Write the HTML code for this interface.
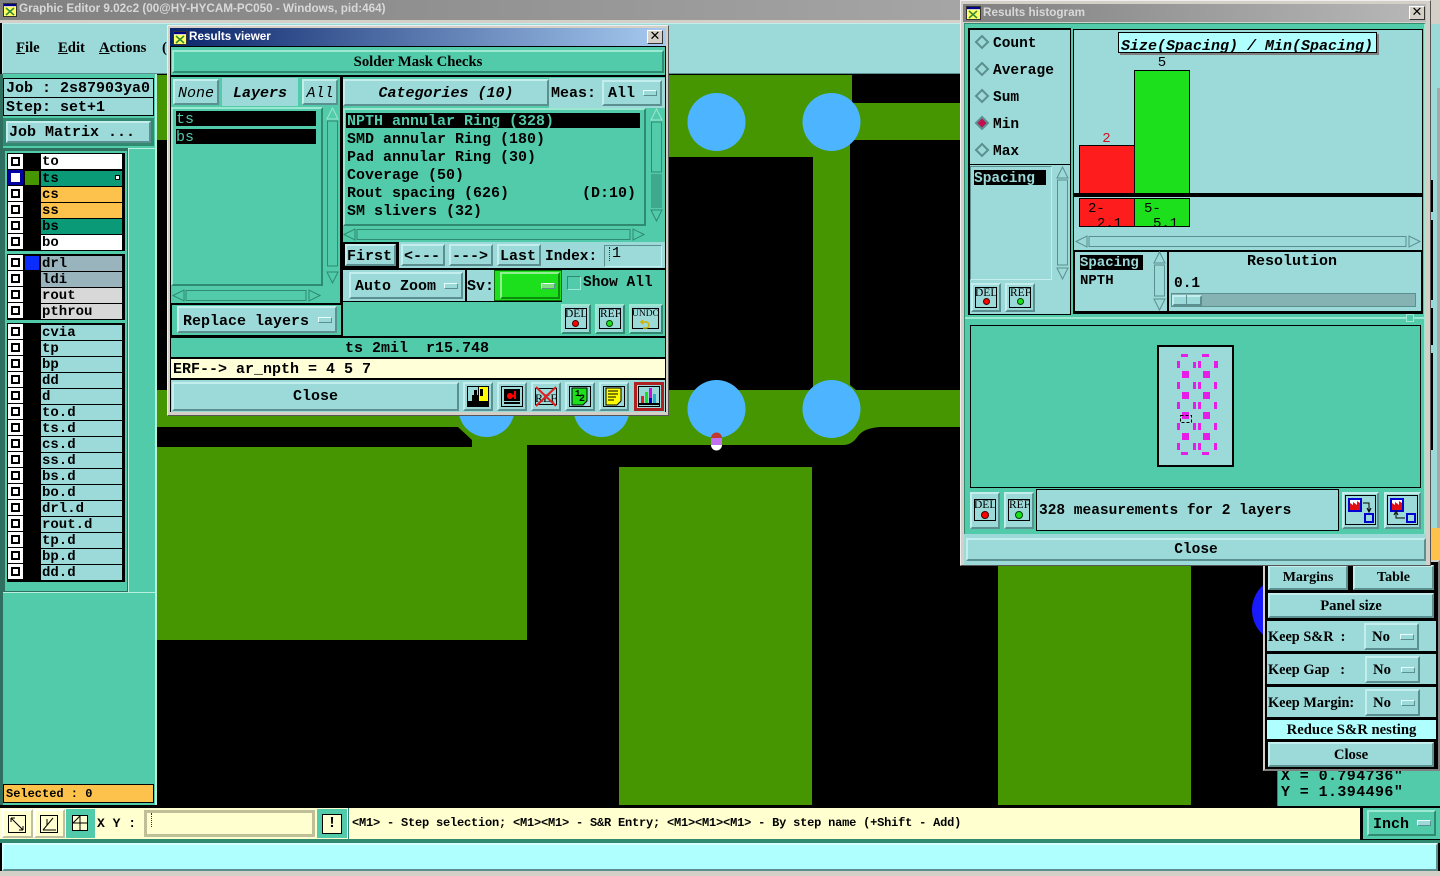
<!DOCTYPE html>
<html><head><meta charset="utf-8"><title>Graphic Editor</title>
<style>
html,body{margin:0;padding:0;background:#000;width:1440px;height:876px;overflow:hidden}
div,span{position:absolute;box-sizing:border-box}
svg{position:absolute;overflow:visible}
.m{font:bold 15px/18px "Liberation Mono",monospace;white-space:pre;color:#000;margin-top:2px}
.s{font:bold 14.700px/18px "Liberation Serif",serif;white-space:pre;color:#000;margin-top:2px}
.c{text-align:center}
.i{font-style:italic}
.l{background:#9cd9d9}
.g{background:#52cbaa}
.b{background:#9cd9d9;border:2px solid;border-color:#c4eeee #5c8f8f #5c8f8f #c4eeee}
.bg{background:#52cbaa;border:2px solid;border-color:#9ce8d0 #2f8a70 #2f8a70 #9ce8d0}
.k{background:#000}
.mk{width:14px;height:6px;background:#9cd9d9;border:1px solid;border-color:#e8ffff #5c8f8f #5c8f8f #e8ffff}
.cb{width:15px;height:15px;background:#000;border:3px solid #fff}
.cb i{position:absolute;left:0;top:0;width:9px;height:9px;border:2px solid #000;background:#fff;box-sizing:border-box}
.r{left:41px;width:81px;height:15px;font:bold 14px/16px "Liberation Mono",monospace;padding-left:1px;white-space:pre}
.tt{font:bold 11.700px/18px "Liberation Sans",sans-serif;white-space:pre}
</style></head><body>

<!-- canvas -->
<div class="k" style="left:0;top:0;width:1440px;height:876px"></div>
<svg style="left:0;top:0" width="1440" height="876">
<g fill="#459600">
<rect x="157" y="75" width="10" height="65"/>
<path d="M660 75H852V103H960V140H850V157H850V385L856 390H960V427H880Q864 428 858 436Q852 445 843 445H472V440L458 427H157V390H813V157H660Z"/>
<rect x="157" y="447" width="370" height="193"/>
<rect x="472" y="440" width="55" height="10"/>
<rect x="619" y="467" width="193" height="338"/>
<rect x="998" y="560" width="193" height="245"/>
</g>
<g fill="#4db5ff">
<circle cx="716.500" cy="122" r="29"/><circle cx="831.500" cy="122" r="29"/>
<circle cx="716.500" cy="409" r="29"/><circle cx="831.500" cy="409" r="29"/>
<circle cx="486.500" cy="409" r="28"/><circle cx="601.500" cy="409" r="28"/>
</g>
<path d="M711 438a5.500 5.500 0 0 1 11 0z" fill="#c0392b"/>
<rect x="711" y="438" width="11" height="7" fill="#c070f0"/>
<path d="M711 445h11a5.500 5.500 0 0 1-11 0z" fill="#fff"/>
<circle cx="1285" cy="610" r="33" fill="#1a1aff"/>
</svg>

<!-- main title -->
<div style="left:0;top:0;width:1440px;height:20px;background:linear-gradient(90deg,#808080,#b8b8b8)"></div>
<div style="left:3px;top:3px;width:14px;height:14px;background:#d4d0c8;border:1px solid #333"><svg width="12" height="12"><rect width="12" height="2" fill="#008"/><rect y="3" width="12" height="9" fill="#ff6"/><path d="M2 4l8 7M10 4l-8 7" stroke="#383" stroke-width="1.500"/></svg></div>
<div class="tt" style="left:19px;top:0;color:#d8d8d8">Graphic Editor 9.02c2 (00@HY-HYCAM-PC050 - Windows, pid:464)</div>

<!-- menu bar -->
<div style="left:0;top:20px;width:1440px;height:3px;background:#d4d0c8"></div>
<div class="l" style="left:2px;top:23px;width:960px;height:51px;border:1px solid;border-color:#c4eeee #5c8f8f #5c8f8f #c4eeee"></div>
<div class="s" style="left:16px;top:37px"><u>F</u>ile</div>
<div class="s" style="left:58px;top:37px"><u>E</u>dit</div>
<div class="s" style="left:99px;top:37px"><u>A</u>ctions</div>
<div class="s" style="left:162px;top:37px">(</div>

<!-- left column -->
<div class="g" style="left:0;top:74px;width:157px;height:734px"></div>
<div style="left:0;top:74px;width:3px;height:734px;background:#2f6f5f"></div>
<div style="left:155px;top:74px;width:2px;height:734px;background:#b8f0e0"></div>
<div class="l" style="left:3px;top:78px;width:151px;height:20px;border:1px solid #000"></div>
<div class="m" style="left:6px;top:78px">Job : 2s87903ya0</div>
<div class="l" style="left:3px;top:97px;width:151px;height:19px;border:1px solid #000"></div>
<div class="m" style="left:6px;top:97px">Step: set+1</div>
<div class="k" style="left:3px;top:118px;width:151px;height:28px;background:#2f8a70"></div>
<div class="b" style="left:6px;top:121px;width:145px;height:22px"></div>
<div class="m" style="left:9px;top:122px">Job Matrix ...</div>

<div style="left:3px;top:148px;width:126px;height:444px;background:#2f6f5f"></div>
<div class="g" style="left:128px;top:148px;width:27px;height:444px;border-left:1px solid #b8f0e0;border-top:1px solid #b8f0e0"></div>
<div class="g" style="left:5px;top:151px;width:122px;height:440px"></div>

<div class="k" style="left:7px;top:153px;width:118px;height:98px"></div>
<div class="k" style="left:7px;top:254px;width:118px;height:66px"></div>
<div class="k" style="left:7px;top:323px;width:118px;height:259px"></div>
<div class="cb" style="left:8px;top:154px"><i></i></div>
<div class="cb" style="left:8px;top:170px;border-color:#0000a0;border-width:3px;background:#fff"><i style="background:#fff;border-color:#fff"></i></div>
<div class="cb" style="left:8px;top:186px"><i></i></div>
<div class="cb" style="left:8px;top:202px"><i></i></div>
<div class="cb" style="left:8px;top:218px"><i></i></div>
<div class="cb" style="left:8px;top:234px"><i></i></div>
<div class="cb" style="left:8px;top:255px"><i></i></div>
<div class="cb" style="left:8px;top:271px"><i></i></div>
<div class="cb" style="left:8px;top:287px"><i></i></div>
<div class="cb" style="left:8px;top:303px"><i></i></div>
<div class="cb" style="left:8px;top:324px"><i></i></div>
<div class="cb" style="left:8px;top:340px"><i></i></div>
<div class="cb" style="left:8px;top:356px"><i></i></div>
<div class="cb" style="left:8px;top:372px"><i></i></div>
<div class="cb" style="left:8px;top:388px"><i></i></div>
<div class="cb" style="left:8px;top:404px"><i></i></div>
<div class="cb" style="left:8px;top:420px"><i></i></div>
<div class="cb" style="left:8px;top:436px"><i></i></div>
<div class="cb" style="left:8px;top:452px"><i></i></div>
<div class="cb" style="left:8px;top:468px"><i></i></div>
<div class="cb" style="left:8px;top:484px"><i></i></div>
<div class="cb" style="left:8px;top:500px"><i></i></div>
<div class="cb" style="left:8px;top:516px"><i></i></div>
<div class="cb" style="left:8px;top:532px"><i></i></div>
<div class="cb" style="left:8px;top:548px"><i></i></div>
<div class="cb" style="left:8px;top:564px"><i></i></div>
<div style="left:25px;top:171px;width:14px;height:14px;background:#459600"></div>
<div style="left:25px;top:256px;width:14px;height:14px;background:#0a2cff"></div>

<div class="r" style="top:154px;background:#fff">to</div>
<div class="r" style="top:171px;background:#0a9a78">ts<span style="right:2px;top:4px;width:5px;height:5px;border:1px solid #000;background:#fff"></span></div>
<div class="r" style="top:187px;background:#fdc24c">cs</div>
<div class="r" style="top:203px;background:#fdc24c">ss</div>
<div class="r" style="top:219px;background:#0a9a78">bs</div>
<div class="r" style="top:235px;background:#fff">bo</div>
<div class="r" style="top:256px;background:#9ab4bd">drl</div>
<div class="r" style="top:272px;background:#9ab4bd">ldi</div>
<div class="r" style="top:288px;background:#d8d8d8">rout</div>
<div class="r" style="top:304px;background:#d8d8d8">pthrou</div>
<div class="r l" style="top:325px">cvia</div>
<div class="r l" style="top:341px">tp</div>
<div class="r l" style="top:357px">bp</div>
<div class="r l" style="top:373px">dd</div>
<div class="r l" style="top:389px">d</div>
<div class="r l" style="top:405px">to.d</div>
<div class="r l" style="top:421px">ts.d</div>
<div class="r l" style="top:437px">cs.d</div>
<div class="r l" style="top:453px">ss.d</div>
<div class="r l" style="top:469px">bs.d</div>
<div class="r l" style="top:485px">bo.d</div>
<div class="r l" style="top:501px">drl.d</div>
<div class="r l" style="top:517px">rout.d</div>
<div class="r l" style="top:533px">tp.d</div>
<div class="r l" style="top:549px">bp.d</div>
<div class="r l" style="top:565px">dd.d</div>

<div style="left:3px;top:592px;width:152px;height:190px;background:#52cbaa;border-top:1px solid #b8f0e0"></div>
<div style="left:3px;top:784px;width:151px;height:19px;background:#fdc24c;border:1px solid #000"></div>
<div style="left:6px;top:786px;font:bold 12px/17px 'Liberation Mono',monospace;white-space:pre">Selected : 0</div>

<!-- bottom bars -->
<div style="left:0;top:805px;width:1440px;height:3px;background:#000"></div>
<div style="left:0;top:808px;width:1440px;height:31px;background:#ffffd0"></div>
<div style="left:0;top:839px;width:1440px;height:4px;background:#2f8a70"></div>
<div style="left:2px;top:843px;width:1436px;height:28px;background:#b0ffff;border:2px solid;border-color:#d8ffff #5c9090 #5c9090 #d8ffff"></div>
<div style="left:0;top:871px;width:1440px;height:5px;background:#d4d0c8"></div>

<div style="left:2px;top:809px;width:31px;height:29px;background:#ffffd0;border:2px solid;border-color:#fff #c0c0a0 #c0c0a0 #fff"></div>
<div style="left:34px;top:809px;width:31px;height:29px;background:#ffffd0;border:2px solid;border-color:#fff #c0c0a0 #c0c0a0 #fff"></div>
<div class="bg" style="left:66px;top:809px;width:29px;height:29px;background:#52cbaa;border-color:#52cbaa"></div>
<svg style="left:8px;top:815px" width="18" height="18" fill="none" stroke="#000"><rect x=".5" y=".5" width="17" height="17"/><path d="M3 3l12 12M3 3h4M3 3v4M15 15h-4M15 15v-4"/></svg>
<svg style="left:40px;top:815px" width="18" height="18" fill="none" stroke="#000"><rect x=".5" y=".5" width="17" height="17"/><path d="M3 15l10-12M3 15h13M7 4v6"/></svg>
<svg style="left:72px;top:815px" width="16" height="16" fill="#ffffd0" stroke="#000"><rect x=".5" y=".5" width="15" height="15"/><path d="M8 1v14M1 8h14M1 8l7-7"/></svg>
<div class="m" style="left:97px;top:813px;font-size:13px">X Y :</div>
<div style="left:144px;top:810px;width:171px;height:27px;background:#ffffd0;border:3px solid #c0c098"></div>
<div style="left:151px;top:813px;width:1px;height:14px;border-left:1px dotted #333"></div>
<div style="left:317px;top:809px;width:30px;height:29px;background:#52cbaa;padding:0"></div>
<div style="left:322px;top:814px;width:20px;height:20px;background:#ffffd0;border:1px solid #000;font:bold 15px/18px 'Liberation Mono',monospace;text-align:center">!</div>
<div style="left:348px;top:808px;width:1px;height:31px;background:#2f8a70"></div>
<div style="left:352px;top:815px;font:bold 12px/16px 'Liberation Mono',monospace;white-space:pre;letter-spacing:-.2px">&lt;M1&gt; - Step selection; &lt;M1&gt;&lt;M1&gt; - S&amp;R Entry; &lt;M1&gt;&lt;M1&gt;&lt;M1&gt; - By step name (+Shift - Add)</div>
<div class="k" style="left:1360px;top:806px;width:80px;height:34px"></div>
<div class="g" style="left:1363px;top:808px;width:77px;height:31px"></div>
<div class="bg" style="left:1367px;top:810px;width:69px;height:26px"></div>
<div class="m" style="left:1373px;top:814px">Inch</div>
<div class="mk" style="left:1417px;top:820px"></div>

<!-- bottom right coords -->
<div class="g" style="left:1277px;top:770px;width:163px;height:36px;border-left:1px solid #2f8a70"></div>
<div class="m" style="left:1281px;top:766px;letter-spacing:.4px">X = 0.794736"</div>
<div class="m" style="left:1281px;top:782px;letter-spacing:.4px">Y = 1.394496"</div>

<!-- right strip behind histogram -->
<div style="left:1430px;top:0;width:10px;height:24px;background:#d4d0c8"></div>
<div class="l" style="left:1430px;top:24px;width:10px;height:52px"></div>
<div class="l" style="left:1430px;top:76px;width:10px;height:489px"></div>
<div style="left:1437px;top:88px;width:3px;height:440px;background:#a8a8a8"></div>
<div class="k" style="left:1430px;top:180px;width:3px;height:270px"></div>
<div class="l" style="left:1430px;top:212px;width:3px;height:8px"></div>
<div class="l" style="left:1430px;top:300px;width:3px;height:8px"></div>
<div class="l" style="left:1430px;top:345px;width:3px;height:8px"></div>
<div style="left:1430px;top:528px;width:10px;height:36px;background:#fdc24c"></div>

<div style="left:1263px;top:560px;width:177px;height:211px;background:#000;border:2px solid #d4d0c8;border-right:2px solid #808080;border-bottom:2px solid #808080"></div>
<div class="b" style="left:1268px;top:565px;width:80px;height:25px"></div>
<div class="s c" style="left:1268px;top:567px;width:80px;font-size:14px">Margins</div>
<div class="b" style="left:1353px;top:565px;width:81px;height:25px"></div>
<div class="s c" style="left:1353px;top:567px;width:81px;font-size:14px">Table</div>
<div class="b" style="left:1268px;top:593px;width:166px;height:25px"></div>
<div class="s c" style="left:1268px;top:595px;width:166px">Panel size</div>
<div class="l" style="left:1267px;top:621px;width:169px;height:30px"></div>
<div class="s" style="left:1268px;top:626px;font-size:14.300px">Keep S&amp;R  :</div>
<div class="b" style="left:1364px;top:623px;width:55px;height:27px"></div>
<div class="s" style="left:1372px;top:626px">No</div><div class="mk" style="left:1400px;top:634px"></div>
<div class="l" style="left:1267px;top:654px;width:169px;height:30px"></div>
<div class="s" style="left:1268px;top:659px;font-size:14.300px">Keep Gap   :</div>
<div class="b" style="left:1365px;top:656px;width:55px;height:27px"></div>
<div class="s" style="left:1373px;top:659px">No</div><div class="mk" style="left:1401px;top:667px"></div>
<div class="l" style="left:1267px;top:687px;width:169px;height:30px"></div>
<div class="s" style="left:1268px;top:692px;font-size:14.300px">Keep Margin:</div>
<div class="b" style="left:1365px;top:689px;width:55px;height:27px"></div>
<div class="s" style="left:1373px;top:692px">No</div><div class="mk" style="left:1401px;top:700px"></div>
<div style="left:1267px;top:720px;width:169px;height:19px;background:#b0ffff"></div>
<div class="s c" style="left:1267px;top:719px;width:169px">Reduce S&amp;R nesting</div>
<div class="b" style="left:1268px;top:742px;width:166px;height:25px"></div>
<div class="s c" style="left:1268px;top:744px;width:166px">Close</div>

<!-- results viewer -->
<div style="left:167px;top:25px;width:502px;height:391px;background:#d4d0c8;border:1px solid;border-color:#eee #555 #555 #eee"></div>
<div style="left:170px;top:28px;width:496px;height:18px;background:linear-gradient(90deg,#0a246a,#a6caf0)"></div>
<div style="left:173px;top:31px;width:14px;height:14px;background:#d4d0c8;border:1px solid #333"><svg width="12" height="12"><rect width="12" height="2" fill="#008"/><rect y="3" width="12" height="9" fill="#ff6"/><path d="M2 4l8 7M10 4l-8 7" stroke="#383" stroke-width="1.500"/></svg></div>
<div class="tt" style="left:189px;top:28px;color:#fff">Results viewer</div>
<div style="left:647px;top:30px;width:16px;height:14px;background:#d4d0c8;border:1px solid;border-color:#fff #333 #333 #fff;font:bold 13px/12px 'DejaVu Sans',sans-serif;text-align:center">✕</div>
<div class="k" style="left:170px;top:46px;width:496px;height:366px"></div>
<div class="g" style="left:171px;top:47px;width:494px;height:364px"></div>
<div class="bg" style="left:172px;top:50px;width:492px;height:23px"></div>
<div class="s c" style="left:172px;top:51px;width:492px">Solder Mask Checks</div>
<div class="k" style="left:170px;top:75px;width:496px;height:2px"></div>
<!-- layers -->
<div class="b" style="left:173px;top:79px;width:46px;height:26px"></div>
<div class="m i c" style="left:173px;top:83px;width:46px;font-weight:normal">None</div>
<div class="l" style="left:222px;top:78px;width:76px;height:28px"></div>
<div class="m i c" style="left:222px;top:83px;width:76px">Layers</div>
<div class="b" style="left:302px;top:79px;width:36px;height:26px"></div>
<div class="m i c" style="left:302px;top:83px;width:36px;font-weight:normal">All</div>
<div class="k" style="left:340px;top:76px;width:3px;height:260px"></div>
<div class="bg" style="left:171px;top:107px;width:152px;height:179px"></div>
<div class="k" style="left:176px;top:111px;width:140px;height:15px"></div>
<div class="k" style="left:176px;top:129px;width:140px;height:15px"></div>
<div class="m" style="left:176px;top:109px;color:#52cbaa;font-weight:normal">ts</div>
<div class="m" style="left:176px;top:127px;color:#52cbaa;font-weight:normal">bs</div>
<svg style="left:326px;top:107px" width="13" height="178"><path d="M6.500 1L12 12H1z" fill="#52cbaa" stroke="#9ce8d0"/><rect x="1.500" y="14" width="10" height="145" fill="#52cbaa" stroke="#2f8a70"/><path d="M6.500 176L12 165H1z" fill="#52cbaa" stroke="#2f8a70"/></svg>
<svg style="left:172px;top:289px" width="150" height="13"><path d="M1 6.500L12 1V12z" fill="#52cbaa" stroke="#2f8a70"/><rect x="14" y="1.500" width="120" height="10" fill="#52cbaa" stroke="#2f8a70"/><path d="M148 6.500L137 1V12z" fill="#52cbaa" stroke="#2f8a70"/></svg>
<div class="k" style="left:170px;top:303px;width:173px;height:34px"></div>
<div class="g" style="left:172px;top:305px;width:169px;height:30px"></div>
<div class="b" style="left:177px;top:306px;width:160px;height:27px"></div>
<div class="m" style="left:183px;top:311px">Replace layers</div>
<div class="mk" style="left:318px;top:317px"></div>
<!-- categories -->
<div class="b" style="left:343px;top:79px;width:206px;height:27px"></div>
<div class="m i c" style="left:343px;top:83px;width:206px">Categories (10)</div>
<div class="l" style="left:549px;top:78px;width:116px;height:30px"></div>
<div class="m" style="left:551px;top:83px">Meas:</div>
<div class="b" style="left:602px;top:80px;width:60px;height:26px"></div>
<div class="m" style="left:608px;top:83px">All</div>
<div class="mk" style="left:643px;top:90px"></div>
<div class="bg" style="left:343px;top:108px;width:303px;height:118px"></div>
<div class="k" style="left:346px;top:113px;width:294px;height:15px"></div>
<div class="m" style="left:347px;top:111px;color:#52cbaa">NPTH annular Ring (328)</div>
<div class="m" style="left:347px;top:129px">SMD annular Ring (180)</div>
<div class="m" style="left:347px;top:147px">Pad annular Ring (30)</div>
<div class="m" style="left:347px;top:165px">Coverage (50)</div>
<div class="m" style="left:347px;top:183px">Rout spacing (626)</div>
<div class="m" style="left:582px;top:183px">(D:10)</div>
<div class="m" style="left:347px;top:201px">SM slivers (32)</div>
<svg style="left:650px;top:108px" width="13" height="115"><path d="M6.500 1L12 12H1z" fill="#52cbaa" stroke="#9ce8d0"/><rect x="1.500" y="14" width="10" height="50" fill="#52cbaa" stroke="#2f8a70"/><rect x="1" y="66" width="11" height="34" fill="#3fa98e"/><path d="M6.500 113L12 102H1z" fill="#52cbaa" stroke="#2f8a70"/></svg>
<svg style="left:343px;top:228px" width="303" height="13"><path d="M1 6.500L12 1V12z" fill="#52cbaa" stroke="#2f8a70"/><rect x="14" y="1.500" width="273" height="10" fill="#52cbaa" stroke="#2f8a70"/><path d="M301 6.500L290 1V12z" fill="#52cbaa" stroke="#2f8a70"/></svg>
<div class="l" style="left:343px;top:242px;width:322px;height:26px"></div>
<div class="k" style="left:343px;top:242px;width:56px;height:26px"></div>
<div class="b" style="left:345px;top:244px;width:51px;height:22px"></div>
<div class="m" style="left:347px;top:246px">First</div>
<div class="b" style="left:401px;top:244px;width:44px;height:22px"></div>
<div class="m" style="left:404px;top:246px">&lt;---</div>
<div class="b" style="left:449px;top:244px;width:44px;height:22px"></div>
<div class="m" style="left:452px;top:246px">---&gt;</div>
<div class="b" style="left:497px;top:244px;width:44px;height:22px"></div>
<div class="m" style="left:500px;top:246px">Last</div>
<div class="m" style="left:545px;top:246px;font-size:14.500px">Index:</div>
<div style="left:604px;top:245px;width:58px;height:22px;background:#9cd9d9;border:1px solid;border-color:#5c8f8f #c4eeee #c4eeee #5c8f8f"></div>
<div class="m" style="left:612px;top:243px;font-weight:normal">1</div>
<div style="left:609px;top:247px;width:1px;height:14px;border-left:1px dotted #333"></div>
<div class="k" style="left:343px;top:268px;width:322px;height:2px"></div>
<div class="l" style="left:343px;top:270px;width:122px;height:31px"></div>
<div class="b" style="left:349px;top:272px;width:114px;height:27px"></div>
<div class="m" style="left:355px;top:276px">Auto Zoom</div>
<div class="mk" style="left:444px;top:283px"></div>
<div class="k" style="left:465px;top:270px;width:2px;height:31px"></div>
<div class="l" style="left:467px;top:270px;width:27px;height:31px"></div>
<div class="m" style="left:467px;top:276px">Sv:</div>
<div style="left:494px;top:270px;width:68px;height:31px;background:#1de01d;border:1px solid #0c6c0c"></div>
<div style="left:500px;top:272px;width:60px;height:27px;background:#1de01d;border:2px solid;border-color:#90f090 #0c8c0c #0c8c0c #90f090"></div>
<div class="mk" style="left:541px;top:283px;background:#80e080"></div>
<div style="left:567px;top:276px;width:14px;height:14px;background:#52cbaa;border:1px solid;border-color:#2f8a70 #9ce8d0 #9ce8d0 #2f8a70"></div>
<div class="m" style="left:583px;top:272px;font-size:14.500px">Show All</div>
<div class="k" style="left:343px;top:301px;width:219px;height:1px"></div>

<!-- del ref undo -->
<div class="bg" style="left:561px;top:304px;width:30px;height:30px;background:#9cd9d9"></div>
<div style="left:565px;top:308px;width:22px;height:21px;border:1px solid #000"></div>
<div style="left:565px;top:308px;font:11.500px/12px 'Liberation Serif',serif">DEL</div>
<div style="left:572px;top:320px;width:7px;height:7px;border-radius:50%;background:#f00;border:1px solid #400"></div>
<div class="bg" style="left:595px;top:304px;width:30px;height:30px;background:#9cd9d9"></div>
<div style="left:599px;top:308px;width:22px;height:21px;border:1px solid #000"></div>
<div style="left:600px;top:308px;font:11.500px/12px 'Liberation Serif',serif">REF</div>
<div style="left:606px;top:320px;width:7px;height:7px;border-radius:50%;background:#1de01d;border:1px solid #040"></div>
<div class="bg" style="left:629px;top:304px;width:34px;height:30px;background:#9cd9d9"></div>
<div style="left:632px;top:308px;width:27px;height:21px;border:1px solid #000"></div>
<div style="left:632px;top:308px;font:9.500px/12px 'Liberation Serif',serif">UNDO</div>
<svg style="left:640px;top:319px" width="10" height="10" fill="none" stroke="#222" stroke-width="1.500"><path d="M1 3h5a3 3 0 0 1 0 6H3M3 1L1 3l2 2" stroke="#d0b000"/></svg>

<!-- status -->
<div class="k" style="left:170px;top:336px;width:496px;height:2px"></div>
<div class="m" style="left:345px;top:338px">ts 2mil  r15.748</div>
<div class="k" style="left:170px;top:357px;width:496px;height:2px"></div>
<div style="left:171px;top:359px;width:494px;height:19px;background:#ffffd8"></div>
<div class="m" style="left:173px;top:359px">ERF--&gt; ar_npth = 4 5 7</div>
<div class="k" style="left:170px;top:378px;width:496px;height:2px"></div>
<div class="l" style="left:171px;top:380px;width:494px;height:32px"></div>
<div class="b" style="left:172px;top:382px;width:287px;height:29px"></div>
<div class="m c" style="left:172px;top:386px;width:287px">Close</div>

<div class="b" style="left:463px;top:382px;width:30px;height:29px"></div>
<svg style="left:467px;top:386px" width="22" height="21"><rect width="22" height="21" fill="#000"/><rect x="1" y="1" width="10" height="14" fill="#9cd9d9"/><rect x="12" y="1" width="9" height="14" fill="#ff0"/><path d="M7 4h3v5h2v6H5V9h2z" fill="#000"/><path d="M13 3h3v7h-3z" fill="#000"/></svg>
<div class="b" style="left:497px;top:382px;width:30px;height:29px"></div>
<svg style="left:501px;top:386px" width="22" height="21"><rect x=".5" y=".5" width="21" height="20" fill="#9cd9d9" stroke="#000"/><rect x="3" y="3" width="16" height="12" fill="#000"/><rect x="3" y="16" width="16" height="2" fill="#000"/><circle cx="9" cy="10" r="3" fill="#f00"/><path d="M9 10h5M14 5v8" stroke="#f00" stroke-width="2"/></svg>
<div class="b" style="left:531px;top:382px;width:30px;height:29px"></div>
<svg style="left:534px;top:386px" width="24" height="21"><rect x="1.500" y="2.500" width="21" height="16" fill="#9cd9d9" stroke="#000"/><text x="1" y="16" font-family="Liberation Serif" font-size="12" fill="#000">REF</text><path d="M2 1l20 19M22 1L2 20" stroke="#e02020" stroke-width="2"/></svg>
<div class="b" style="left:565px;top:382px;width:30px;height:29px"></div>
<svg style="left:569px;top:386px" width="22" height="21"><rect x=".5" y=".5" width="21" height="20" fill="#9cd9d9" stroke="#000"/><path d="M3 2h15v13l-4 4H3z" fill="#1de01d" stroke="#000"/><text x="6" y="10" font-family="Liberation Mono" font-weight="bold" font-size="9">1</text><text x="10" y="15" font-family="Liberation Mono" font-weight="bold" font-size="10">2</text></svg>
<div class="b" style="left:599px;top:382px;width:30px;height:29px"></div>
<svg style="left:603px;top:386px" width="22" height="21"><rect x=".5" y=".5" width="21" height="20" fill="#9cd9d9" stroke="#000"/><path d="M3 2h15v13l-4 4H3z" fill="#ff0" stroke="#000"/><path d="M5 5h10M5 8h10M5 11h8M5 14h6" stroke="#000"/></svg>
<div style="left:634px;top:382px;width:30px;height:29px;background:#9cd9d9;border:3px solid #b02020"></div>
<svg style="left:638px;top:386px" width="22" height="21"><rect x=".5" y=".5" width="21" height="20" fill="none" stroke="#000"/><rect x="3" y="10" width="3" height="8" fill="#e02020"/><rect x="7" y="6" width="3" height="12" fill="#1de01d"/><rect x="11" y="2" width="3" height="16" fill="#d010d0"/><rect x="11" y="12" width="3" height="6" fill="#0000c0"/><rect x="15" y="8" width="3" height="10" fill="#20b0d0"/><path d="M1 18h20" stroke="#000" stroke-width="2"/></svg>

<!-- histogram window -->
<div style="left:960px;top:0;width:471px;height:566px;background:#d4d0c8;border:1px solid;border-color:#eee #555 #555 #eee"></div>
<div style="left:963px;top:4px;width:463px;height:18px;background:linear-gradient(90deg,#808080,#b8b8b8)"></div>
<div style="left:966px;top:6px;width:15px;height:14px;background:#d4d0c8;border:1px solid #333"><svg width="13" height="12"><rect width="13" height="2" fill="#008"/><rect y="3" width="13" height="9" fill="#ff6"/><path d="M2 4l8 7M10 4l-8 7" stroke="#383" stroke-width="1.500"/></svg></div>
<div class="tt" style="left:983px;top:4px;color:#d8d8d8">Results histogram</div>
<div style="left:1409px;top:6px;width:16px;height:14px;background:#d4d0c8;border:1px solid;border-color:#fff #333 #333 #fff;font:bold 13px/12px 'DejaVu Sans',sans-serif;text-align:center">✕</div>
<div class="g" style="left:964px;top:23px;width:462px;height:515px;border:1px solid #2f8a70;border-right:2px solid #9ce8d0"></div>

<div class="l" style="left:968px;top:28px;width:103px;height:287px;border:1px solid #000;border-width:2px 1px 1px 2px"></div>
<svg style="left:974px;top:33px" width="18" height="130">
<g fill="#9cd9d9" stroke="#5c8f8f" stroke-width="2">
<path d="M8 3l6 6-6 6-6-6z"/><path d="M8 30l6 6-6 6-6-6z"/><path d="M8 57l6 6-6 6-6-6z"/><path d="M8 111l6 6-6 6-6-6z"/>
</g>
<path d="M8 84l6 6-6 6-6-6z" fill="#c01050" stroke="#5c8f8f" stroke-width="2"/>
</svg>
<div class="m" style="left:993px;top:33px;font-size:14.500px">Count</div>
<div class="m" style="left:993px;top:60px;font-size:14.500px">Average</div>
<div class="m" style="left:993px;top:87px;font-size:14.500px">Sum</div>
<div class="m" style="left:993px;top:114px;font-size:14.500px">Min</div>
<div class="m" style="left:993px;top:141px;font-size:14.500px">Max</div>
<div class="k" style="left:969px;top:164px;width:101px;height:1px"></div>
<div style="left:970px;top:166px;width:82px;height:114px;border:1px solid;border-color:#5c8f8f #c4eeee #c4eeee #5c8f8f"></div>
<div class="k" style="left:974px;top:170px;width:72px;height:15px"></div>
<div class="m" style="left:974px;top:168px;color:#9cd9d9;font-size:14.500px">Spacing</div>
<svg style="left:1056px;top:166px" width="13" height="114"><path d="M6.500 1L12 12H1z" fill="#9cd9d9" stroke="#5c8f8f"/><rect x="1.500" y="14" width="10" height="85" fill="#9cd9d9" stroke="#5c8f8f"/><path d="M6.500 113L12 102H1z" fill="#9cd9d9" stroke="#5c8f8f"/></svg>
<div class="b" style="left:971px;top:283px;width:30px;height:29px"></div>
<div style="left:975px;top:287px;width:22px;height:21px;border:1px solid #000"></div>
<div style="left:975px;top:287px;font:11.500px/12px 'Liberation Serif',serif">DEL</div>
<div style="left:983px;top:298px;width:7px;height:7px;border-radius:50%;background:#f00;border:1px solid #400"></div>
<div class="b" style="left:1005px;top:283px;width:30px;height:29px"></div>
<div style="left:1009px;top:287px;width:22px;height:21px;border:1px solid #000"></div>
<div style="left:1010px;top:287px;font:11.500px/12px 'Liberation Serif',serif">REF</div>
<div style="left:1017px;top:298px;width:7px;height:7px;border-radius:50%;background:#1de01d;border:1px solid #040"></div>

<div class="l" style="left:1073px;top:29px;width:350px;height:285px;border:1px solid #000"></div>
<div style="left:1120px;top:34px;width:259px;height:21px;background:#808080"></div>
<div style="left:1118px;top:32px;width:259px;height:21px;background:#b0ffff;border:1px solid #000"></div>
<div class="m i" style="left:1121px;top:36px">Size(Spacing) / Min(Spacing)</div>
<div class="m c" style="left:1134px;top:52px;width:56px;font-size:14px;font-weight:normal">5</div>
<div class="m c" style="left:1079px;top:128px;width:55px;font-size:14px;font-weight:normal;color:#d01020">2</div>
<div style="left:1079px;top:145px;width:56px;height:49px;background:#ff1c1c;border:1px solid #000"></div>
<div style="left:1134px;top:70px;width:56px;height:124px;background:#1de01d;border:1px solid #000"></div>
<div class="k" style="left:1074px;top:193px;width:348px;height:4px"></div>
<div style="left:1079px;top:198px;width:56px;height:29px;background:#ff1c1c;border:1px solid #000"></div>
<div style="left:1134px;top:198px;width:56px;height:29px;background:#1de01d;border:1px solid #000"></div>
<div class="m" style="left:1088px;top:198px;font-size:14px;font-weight:normal">2-</div>
<div class="m" style="left:1097px;top:213px;font-size:14px;font-weight:normal">2.1</div>
<div class="m" style="left:1144px;top:198px;font-size:14px;font-weight:normal">5-</div>
<div class="m" style="left:1153px;top:213px;font-size:14px;font-weight:normal">5.1</div>
<div class="l" style="left:1074px;top:228px;width:348px;height:6px"></div>
<svg style="left:1075px;top:235px" width="346" height="13"><path d="M1 6.500L12 1V12z" fill="#9cd9d9" stroke="#5c8f8f"/><rect x="14" y="1.500" width="317" height="10" fill="#9cd9d9" stroke="#5c8f8f"/><path d="M345 6.500L334 1V12z" fill="#9cd9d9" stroke="#5c8f8f"/></svg>
<div class="k" style="left:1073px;top:250px;width:350px;height:63px"></div>
<div class="l" style="left:1075px;top:252px;width:346px;height:59px"></div>
<div class="k" style="left:1080px;top:255px;width:63px;height:15px"></div>
<div class="m" style="left:1080px;top:252px;color:#9cd9d9;font-size:14px">Spacing</div>
<div class="m" style="left:1080px;top:270px;font-size:14px">NPTH</div>
<svg style="left:1153px;top:251px" width="13" height="60"><path d="M6.500 1L12 12H1z" fill="#9cd9d9" stroke="#5c8f8f"/><rect x="1.500" y="14" width="10" height="31" fill="#9cd9d9" stroke="#5c8f8f"/><path d="M6.500 59L12 48H1z" fill="#9cd9d9" stroke="#5c8f8f"/></svg>
<div class="k" style="left:1167px;top:251px;width:2px;height:61px"></div>
<div class="m" style="left:1247px;top:251px;font-size:15px">Resolution</div>
<div class="m" style="left:1174px;top:273px;font-size:14.500px">0.1</div>
<div style="left:1171px;top:293px;width:245px;height:14px;background:#85b3b3;border:1px solid #5c8f8f"></div>
<div class="b" style="left:1172px;top:295px;width:30px;height:11px"></div>
<div class="k" style="left:1186px;top:295px;width:1px;height:11px;background:#5c8f8f"></div>

<!-- sash -->
<div style="left:965px;top:317px;width:460px;height:2px;background:#9ce8d0"></div>
<div class="g" style="left:1406px;top:314px;width:8px;height:8px;border:1px solid #9ce8d0"></div>

<!-- preview -->
<div class="g" style="left:970px;top:325px;width:451px;height:163px;border:1px solid #000"></div>
<svg style="left:1157px;top:345px" width="77" height="122">
<rect x="1" y="1" width="75" height="120" fill="#9cd9d9" stroke="#000" stroke-width="2"/>
<g fill="#e81ce8">
<rect x="24" y="9" width="7" height="3"/><rect x="45" y="9" width="7" height="3"/>
<rect x="20" y="16" width="3" height="7"/><rect x="36" y="17" width="3" height="6"/><rect x="41" y="16" width="3" height="7"/><rect x="57" y="16" width="4" height="7"/>
<rect x="25" y="26" width="7" height="7"/><rect x="46" y="26" width="7" height="7"/>
<rect x="20" y="37" width="3" height="7"/><rect x="36" y="37" width="3" height="7"/><rect x="41" y="37" width="3" height="7"/><rect x="57" y="37" width="3" height="7"/>
<rect x="25" y="47" width="7" height="7"/><rect x="46" y="47" width="7" height="7"/>
<rect x="20" y="57" width="3" height="7"/><rect x="36" y="57" width="3" height="7"/><rect x="41" y="57" width="3" height="7"/><rect x="57" y="57" width="3" height="7"/>
<rect x="25" y="67" width="7" height="7"/><rect x="46" y="67" width="7" height="7"/>
<rect x="20" y="78" width="3" height="7"/><rect x="36" y="78" width="3" height="7"/><rect x="41" y="78" width="3" height="7"/><rect x="57" y="78" width="3" height="7"/>
<rect x="25" y="88" width="7" height="7"/><rect x="46" y="88" width="7" height="7"/>
<rect x="20" y="98" width="3" height="7"/><rect x="36" y="98" width="3" height="7"/><rect x="41" y="98" width="3" height="7"/><rect x="57" y="98" width="3" height="7"/>
<rect x="24" y="107" width="7" height="3"/><rect x="45" y="107" width="7" height="3"/>
</g>
<rect x="23.500" y="70.500" width="11" height="7" fill="none" stroke="#000" stroke-dasharray="3 2"/>
</svg>

<!-- histogram bottom row -->
<div class="b" style="left:970px;top:492px;width:30px;height:37px"></div>
<div style="left:974px;top:499px;width:22px;height:22px;border:1px solid #000"></div>
<div style="left:974px;top:499px;font:11.500px/12px 'Liberation Serif',serif">DEL</div>
<div style="left:981px;top:511px;width:8px;height:8px;border-radius:50%;background:#f00;border:1px solid #400"></div>
<div class="b" style="left:1004px;top:492px;width:30px;height:37px"></div>
<div style="left:1008px;top:499px;width:22px;height:22px;border:1px solid #000"></div>
<div style="left:1009px;top:499px;font:11.500px/12px 'Liberation Serif',serif">REF</div>
<div style="left:1015px;top:511px;width:8px;height:8px;border-radius:50%;background:#1de01d;border:1px solid #040"></div>
<div class="l" style="left:1036px;top:489px;width:303px;height:42px;border:1px solid #000"></div>
<div class="m" style="left:1039px;top:500px;font-size:14.500px">328 measurements for 2 layers</div>
<div class="b" style="left:1342px;top:492px;width:37px;height:37px"></div>
<svg style="left:1345px;top:495px" width="31" height="30"><rect x=".5" y=".5" width="30" height="29" fill="#9cd9d9" stroke="#000"/><rect x="4" y="4" width="12" height="12" fill="#fff" stroke="#0000d0" stroke-width="2"/><path d="M5 15V8l3 2V7l4 3V6l3 2v7z" fill="#e01010"/><rect x="20" y="19" width="8" height="8" fill="#9cd9d9" stroke="#0000d0" stroke-width="2"/><path d="M18 8h6v8M22 13l2 4 2-4" fill="none" stroke="#000"/></svg>
<div class="b" style="left:1384px;top:492px;width:37px;height:37px"></div>
<svg style="left:1387px;top:495px" width="31" height="30"><rect x=".5" y=".5" width="30" height="29" fill="#9cd9d9" stroke="#000"/><rect x="4" y="4" width="12" height="12" fill="#fff" stroke="#0000d0" stroke-width="2"/><path d="M5 15V8l3 2V7l4 3V6l3 2v7z" fill="#e01010"/><rect x="20" y="19" width="8" height="8" fill="#9cd9d9" stroke="#0000d0" stroke-width="2"/><path d="M18 23h-9v-5M7 20l2-4 2 4" fill="none" stroke="#000"/></svg>

<div class="l" style="left:964px;top:534px;width:462px;height:31px"></div>
<div class="b" style="left:966px;top:538px;width:460px;height:23px"></div>
<div class="m c" style="left:966px;top:539px;width:460px;font-size:14.500px">Close</div>
</body></html>
